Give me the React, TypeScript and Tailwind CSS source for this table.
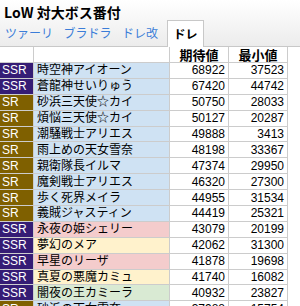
import React from 'react'

type Rank = 'SSR' | 'SR'
type Tint = 'blue' | 'pink' | 'yellow' | 'green'

interface Row {
  rank: Rank
  name: string
  expected: number
  minimum: number
  tint: Tint
}

const rows: Row[] = [
  { rank: 'SSR', name: '時空神アイオーン', expected: 68922, minimum: 37523, tint: 'blue' },
  { rank: 'SSR', name: '蒼龍神せいりゅう', expected: 67420, minimum: 44742, tint: 'blue' },
  { rank: 'SR', name: '砂浜三天使☆カイ', expected: 50750, minimum: 28033, tint: 'blue' },
  { rank: 'SR', name: '煩悩三天使☆カイ', expected: 50127, minimum: 20287, tint: 'blue' },
  { rank: 'SR', name: '潮騒戦士アリエス', expected: 49888, minimum: 3413, tint: 'blue' },
  { rank: 'SR', name: '雨上めの天女雪奈', expected: 48198, minimum: 33367, tint: 'blue' },
  { rank: 'SR', name: '親衛隊長イルマ', expected: 47374, minimum: 29950, tint: 'blue' },
  { rank: 'SR', name: '魔剣戦士アリエス', expected: 46320, minimum: 27300, tint: 'blue' },
  { rank: 'SR', name: '歩く死界メイラ', expected: 44955, minimum: 31534, tint: 'blue' },
  { rank: 'SR', name: '義賊ジャスティン', expected: 44419, minimum: 25321, tint: 'blue' },
  { rank: 'SSR', name: '永夜の姫シェリー', expected: 43079, minimum: 20199, tint: 'pink' },
  { rank: 'SSR', name: '夢幻のメア', expected: 42062, minimum: 31300, tint: 'yellow' },
  { rank: 'SSR', name: '早星のリーザ', expected: 41878, minimum: 19698, tint: 'pink' },
  { rank: 'SSR', name: '真夏の悪魔カミュ', expected: 41740, minimum: 16082, tint: 'yellow' },
  { rank: 'SSR', name: '闇夜の王カミーラ', expected: 40932, minimum: 23827, tint: 'green' },
  { rank: 'SR', name: '砂浜の天女雪奈', expected: 37988, minimum: 15754, tint: 'blue' }
]

const tintClass: Record<Tint, string> = {
  blue: 'bg-[#cfe2f3]',
  pink: 'bg-[#f4cccc]',
  yellow: 'bg-[#fff2cc]',
  green: 'bg-[#d9ead3]'
}

const rankClass: Record<Rank, string> = {
  SSR: 'bg-[#351c75]',
  SR: 'bg-[#7f6000]'
}

const tabs = [
  { label: 'ツァーリ', width: 'w-[58px]' },
  { label: 'ブラドラ', width: 'w-[59px]' },
  { label: 'ドレ改', width: 'w-[46px]' }
]

export default function App() {
  return (
    <div className="h-[306px] w-[300px] overflow-hidden bg-white font-['Noto_Sans_CJK_JP',sans-serif]">
      {/* header + tabs */}
      <div className="border-b border-[#c8c8c8] bg-gradient-to-b from-white to-[#ececec]">
        <h1 className="h-[20px] pl-[4px] pt-[3px] text-[14px] font-bold leading-[18px] text-black">
          LoW 対大ボス番付
        </h1>
        <div className="flex h-[26px] items-end">
          {tabs.map((tab) => (
            <div
              key={tab.label}
              className={`${tab.width} flex h-full items-center justify-center text-[12px] text-[#3b7dd8]`}
            >
              {tab.label}
            </div>
          ))}
          <div className="-mb-px ml-[4px] flex h-[27px] w-[37px] items-center justify-center border border-b-0 border-[#c8c8c8] bg-white text-[12px] font-bold text-black">
            ドレ
          </div>
        </div>
      </div>

      {/* table */}
      <div className="w-[288px] font-['Liberation_Sans','Noto_Sans_CJK_JP',sans-serif] text-[12px]">
        <div className="flex h-[16px] border-b border-[#cccccc] bg-white">
          <div className="w-[34px] border-r border-[#cccccc]" />
          <div className="w-[136px] border-r border-[#cccccc]" />
          <div className="flex w-[59px] items-center justify-center border-r border-[#cccccc] font-['Noto_Sans_CJK_JP',sans-serif] text-[13px] font-bold leading-none">
            期待値
          </div>
          <div className="flex w-[59px] items-center justify-center border-r border-[#cccccc] font-['Noto_Sans_CJK_JP',sans-serif] text-[13px] font-bold leading-none">
            最小値
          </div>
        </div>
        {rows.map((row) => (
          <div key={row.name} className="flex h-[15.9px] border-b border-[#cccccc] leading-none">
            <div
              className={`${rankClass[row.rank]} flex w-[34px] items-center border-r border-[#cccccc] pl-[2px] text-white`}
            >
              {row.rank}
            </div>
            <div
              className={`${tintClass[row.tint]} flex w-[136px] items-center border-r border-[#cccccc] pl-[3px] text-black`}
            >
              {row.name}
            </div>
            <div className="flex w-[59px] items-center justify-end border-r border-[#cccccc] pr-[3px] text-black">
              {row.expected}
            </div>
            <div className="flex w-[59px] items-center justify-end border-r border-[#cccccc] pr-[3px] text-black">
              {row.minimum}
            </div>
          </div>
        ))}
      </div>
    </div>
  )
}
